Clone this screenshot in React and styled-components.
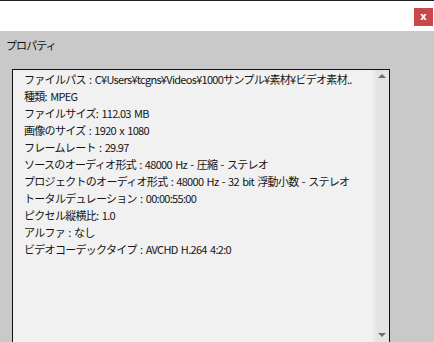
import styled, { createGlobalStyle } from "styled-components";

const GlobalStyle = createGlobalStyle`
  html, body {
    margin: 0;
    padding: 0;
    width: 434px;
    height: 342px;
    overflow: hidden;
  }
  body {
    font-family: "Noto Sans CJK JP", "Noto Sans", sans-serif;
  }
`;

const Window = styled.div`
  width: 434px;
  height: 342px;
  display: flex;
  flex-direction: column;
  background: #c9c9c9;
  overflow: hidden;
`;

const TopEdge = styled.div`
  height: 1px;
  background: #1e1e1e;
  flex-shrink: 0;
`;

const TitleBar = styled.div`
  height: 30px;
  background: #ffffff;
  display: flex;
  justify-content: flex-end;
  align-items: flex-start;
  padding: 7px 1px 0 0;
  box-sizing: border-box;
  flex-shrink: 0;
`;

const CloseButton = styled.button`
  width: 19px;
  height: 18px;
  border: none;
  padding: 0;
  background: #c8494b;
  color: #ffffff;
  font-family: "DejaVu Sans", sans-serif;
  font-size: 10px;
  font-weight: bold;
  line-height: 18px;
  text-align: center;
`;

const Body = styled.div`
  flex: 1;
  display: flex;
  flex-direction: column;
  padding: 5px 0 0 12px;
`;

const Heading = styled.div`
  font-size: 11px;
  letter-spacing: -0.9px;
  color: #111;
  height: 28px;
  line-height: 18px;
  margin-left: -6px;
`;

const Panel = styled.div`
  width: 376px;
  flex: 1;
  margin-top: 5px;
  background: #f1f1f1;
  border-top: 1px solid #111;
  border-left: 1px solid #111;
  border-right: 1px solid #111;
  display: flex;
`;

const List = styled.ul`
  flex: 1;
  list-style: none;
  margin: 0;
  padding: 1px 0 0 11px;
  min-width: 0;
`;

const Row = styled.li`
  font-size: 11px;
  letter-spacing: -0.7px;
  word-spacing: 1.5px;
  line-height: 17px;
  color: #151515;
  white-space: nowrap;
  overflow: hidden;
  padding-right: 8px;
`;

const Scrollbar = styled.div`
  width: 14px;
  background: #e4e4e4;
  display: flex;
  flex-direction: column;
  justify-content: space-between;
  align-items: center;
  padding: 4px 0 5px;
  box-shadow: -3px 0 0 #ececec;
`;

const Arrow = styled.div`
  width: 0;
  height: 0;
  border-left: 4px solid transparent;
  border-right: 4px solid transparent;
  ${({ $down }) =>
    $down
      ? "border-top: 4px solid #6e6e6e;"
      : "border-bottom: 4px solid #6e6e6e;"}
`;

const rows = [
  "ファイルパス : C¥Users¥tcgns¥Videos¥1000サンプル¥素材¥ビデオ素材..",
  "種類: MPEG",
  "ファイルサイズ: 112.03 MB",
  "画像のサイズ : 1920 x 1080",
  "フレームレート : 29.97",
  "ソースのオーディオ形式 : 48000 Hz - 圧縮 - ステレオ",
  "プロジェクトのオーディオ形式 : 48000 Hz - 32 bit 浮動小数 - ステレオ",
  "トータルデュレーション : 00:00:55:00",
  "ピクセル縦横比: 1.0",
  "アルファ : なし",
  "ビデオコーデックタイプ : AVCHD H.264 4:2:0",
];

const App = () => {
  return (
    <Window>
      <GlobalStyle />
      <TopEdge />
      <TitleBar>
        <CloseButton>x</CloseButton>
      </TitleBar>
      <Body>
        <Heading>プロパティ</Heading>
        <Panel>
          <List>
            {rows.map((r) => (
              <Row key={r}>{r}</Row>
            ))}
          </List>
          <Scrollbar>
            <Arrow />
            <Arrow $down />
          </Scrollbar>
        </Panel>
      </Body>
    </Window>
  );
};

export default App;
